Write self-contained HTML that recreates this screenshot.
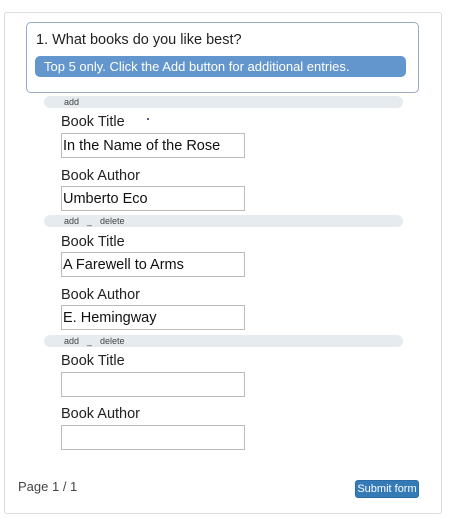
<!DOCTYPE html>
<html><head><style>
body{margin:0;width:450px;height:521px;background:#fff;font-family:"Liberation Sans",Arial,sans-serif;position:relative;overflow:hidden;color:#222}
.a{position:absolute}
.panel{left:4px;top:12px;width:436px;height:500px;border:1px solid #ddd;border-radius:3px}
.q{left:26px;top:22px;width:391px;height:69px;border:1px solid #98acc4;border-radius:5px}
.qt{left:36px;top:32px;font-size:14.5px;color:#222}
.blue{left:35px;top:56px;width:371px;height:21px;background:#6396cc;border-radius:5px;color:#fff;font-size:13px;line-height:21px;text-indent:9px}
.bar{left:44px;width:359px;height:12px;background:#e5ebef;border-radius:6px;font-size:9px;line-height:12px;color:#444}
.bar span{position:absolute;top:0}
.lab{left:61px;font-size:14.5px;color:#222}
.in{left:61px;width:182px;height:23px;border:1px solid #bbb;font-size:14.5px;line-height:25px;text-indent:1px;color:#111}
.pg{left:18px;top:479px;font-size:13px;color:#444}
.btn{left:355px;top:480px;width:64px;height:18px;background:#337ab7;border:1px solid #2e6da4;border-radius:3px;color:#fff;font-size:11px;line-height:17px;text-align:center;box-sizing:border-box}
</style></head><body>
<div class="a panel"></div>
<div class="a q"></div>
<div class="a qt">1. What books do you like best?</div>
<div class="a blue">Top 5 only. Click the Add button for additional entries.</div>

<div class="a bar" style="top:96px"><span style="left:20px">add</span></div>
<div class="a lab" style="top:114px">Book Title</div>
<div class="a" style="left:147px;top:118px;width:2px;height:2px;background:#55a"></div>
<div class="a in" style="top:133px">In the Name of the Rose</div>
<div class="a lab" style="top:168px">Book Author</div>
<div class="a in" style="top:186px">Umberto Eco</div>

<div class="a bar" style="top:215px"><span style="left:20px">add</span><span style="left:43px">_</span><span style="left:56px">delete</span></div>
<div class="a lab" style="top:234px">Book Title</div>
<div class="a in" style="top:252px">A Farewell to Arms</div>
<div class="a lab" style="top:287px">Book Author</div>
<div class="a in" style="top:305px">E. Hemingway</div>

<div class="a bar" style="top:335px"><span style="left:20px">add</span><span style="left:43px">_</span><span style="left:56px">delete</span></div>
<div class="a lab" style="top:353px">Book Title</div>
<div class="a in" style="top:372px"></div>
<div class="a lab" style="top:406px">Book Author</div>
<div class="a in" style="top:425px"></div>

<div class="a pg">Page 1 / 1</div>
<div class="a btn">Submit form</div>
</body></html>
